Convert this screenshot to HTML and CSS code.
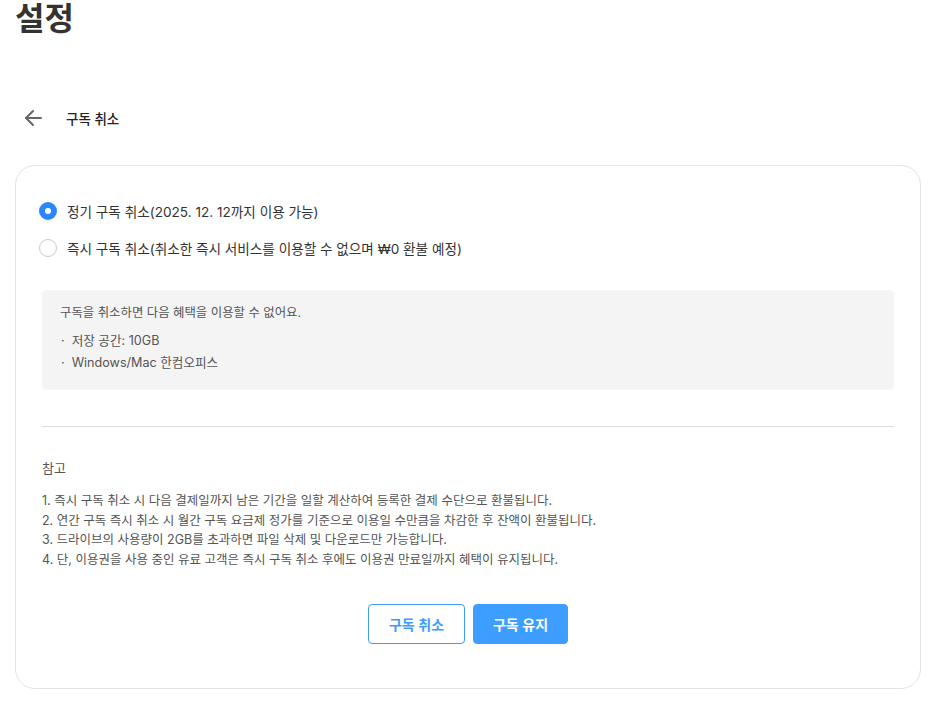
FILE: index.html
```html
<!DOCTYPE html>
<html lang="ko">
<head>
<meta charset="utf-8">
<title>설정</title>
<link rel="stylesheet" href="styles.css">
</head>
<body>
<h1 class="page-title">설정</h1>
<div class="subheader">
  <button class="back-btn" aria-label="뒤로">
    <svg width="20" height="20" viewBox="0 0 20 20" fill="none" stroke="#666" stroke-width="2" stroke-linecap="round" stroke-linejoin="round"><path d="M18 10H3"/><path d="M10 3L3 10l7 7"/></svg>
  </button>
  <span class="subheader-title">구독 취소</span>
</div>
<section class="card">
  <div class="options">
    <label class="option">
      <span class="radio checked"></span>
      <span>정기 구독 취소(2025. 12. 12까지 이용 가능)</span>
    </label>
    <label class="option">
      <span class="radio"></span>
      <span>즉시 구독 취소(취소한 즉시 서비스를 이용할 수 없으며 ₩0 환불 예정)</span>
    </label>
  </div>
  <div class="notice">
    <p class="notice-lead">구독을 취소하면 다음 혜택을 이용할 수 없어요.</p>
    <ul class="notice-list">
      <li>저장 공간: 10GB</li>
      <li>Windows/Mac 한컴오피스</li>
    </ul>
  </div>
  <hr class="divider">
  <div class="ref">
    <p class="ref-title">참고</p>
    <ol class="ref-list">
      <li>1. 즉시 구독 취소 시 다음 결제일까지 남은 기간을 일할 계산하여 등록한 결제 수단으로 환불됩니다.</li>
      <li>2. 연간 구독 즉시 취소 시 월간 구독 요금제 정가를 기준으로 이용일 수만큼을 차감한 후 잔액이 환불됩니다.</li>
      <li>3. 드라이브의 사용량이 2GB를 초과하면 파일 삭제 및 다운로드만 가능합니다.</li>
      <li>4. 단, 이용권을 사용 중인 유료 고객은 즉시 구독 취소 후에도 이용권 만료일까지 혜택이 유지됩니다.</li>
    </ol>
  </div>
  <div class="actions">
    <button class="btn btn-outline">구독 취소</button>
    <button class="btn btn-primary">구독 유지</button>
  </div>
</section>
</body>
</html>
```
FILE: styles.css
```css
* { box-sizing: border-box; }
html, body { margin: 0; padding: 0; background: #fff; }
body {
  font-family: Inter, "Noto Sans CJK KR", sans-serif;
  color: #222;
}
.page-title {
  margin: 0;
  padding-left: 15px;
  font-size: 32px;
  line-height: 38px;
  font-weight: 700;
  color: #333;
}
.subheader {
  display: flex;
  align-items: center;
  height: 24px;
  margin-top: 68px;
  padding-left: 23px;
}
.back-btn {
  border: 0;
  background: none;
  padding: 0;
  width: 20px;
  height: 20px;
  display: flex;
  cursor: pointer;
}
.subheader-title {
  margin-left: 23px;
  font-size: 13.5px;
  font-weight: 500;
  color: #222;
}
.card {
  margin: 35px 0 0 15px;
  width: 906px;
  height: 524px;
  border: 1px solid #e3e3ea;
  border-radius: 20px;
  padding: 0 26px;
}
.options {
  display: flex;
  flex-direction: column;
  gap: 17px;
  padding-top: 35px;
}
.option {
  display: flex;
  align-items: center;
  gap: 10px;
  font-size: 13.6px;
  color: #333;
  height: 20px;
  margin-left: -3px;
}
.radio {
  width: 18px;
  height: 18px;
  border-radius: 50%;
  border: 1px solid #c9c9d2;
  background: #fff;
  flex: none;
}
.radio.checked {
  border: 6px solid #2b86ff;
}
.notice {
  margin-top: 32px;
  background: #f4f4f4;
  border-radius: 5px;
  padding: 13px 18px 18px;
  height: 100px;
  font-size: 12.6px;
  color: #555;
}
.notice-lead { margin: 0 0 7px; line-height: 20px; font-size: 12.4px; }
.notice-list { list-style: none; margin: 0; padding: 0; }
.notice-list li { line-height: 22px; }
.notice-list li::before { content: "·"; margin-right: 7px; margin-left: 1px; }
.divider {
  margin: 36px 0 0;
  border: 0;
  border-top: 1px solid #dcdce0;
}
.ref { padding-top: 31px; color: #555; }
.ref-title { margin: 0; font-size: 13px; line-height: 20px; }
.ref-list {
  list-style: none;
  margin: 13px 0 0;
  padding: 0;
  font-size: 12.5px;
  line-height: 19.5px;
}
.actions {
  display: flex;
  justify-content: center;
  gap: 8px;
  margin-top: 35px;
}
.btn {
  font-family: inherit;
  font-size: 14px;
  font-weight: 600;
  height: 40px;
  border-radius: 4px;
  cursor: pointer;
}
.btn-outline {
  width: 97px;
  background: #fff;
  border: 1px solid #3d9bff;
  color: #3d9bff;
}
.btn-primary {
  width: 95px;
  background: #3d9eff;
  border: 1px solid #3d9eff;
  color: #fff;
}
```
